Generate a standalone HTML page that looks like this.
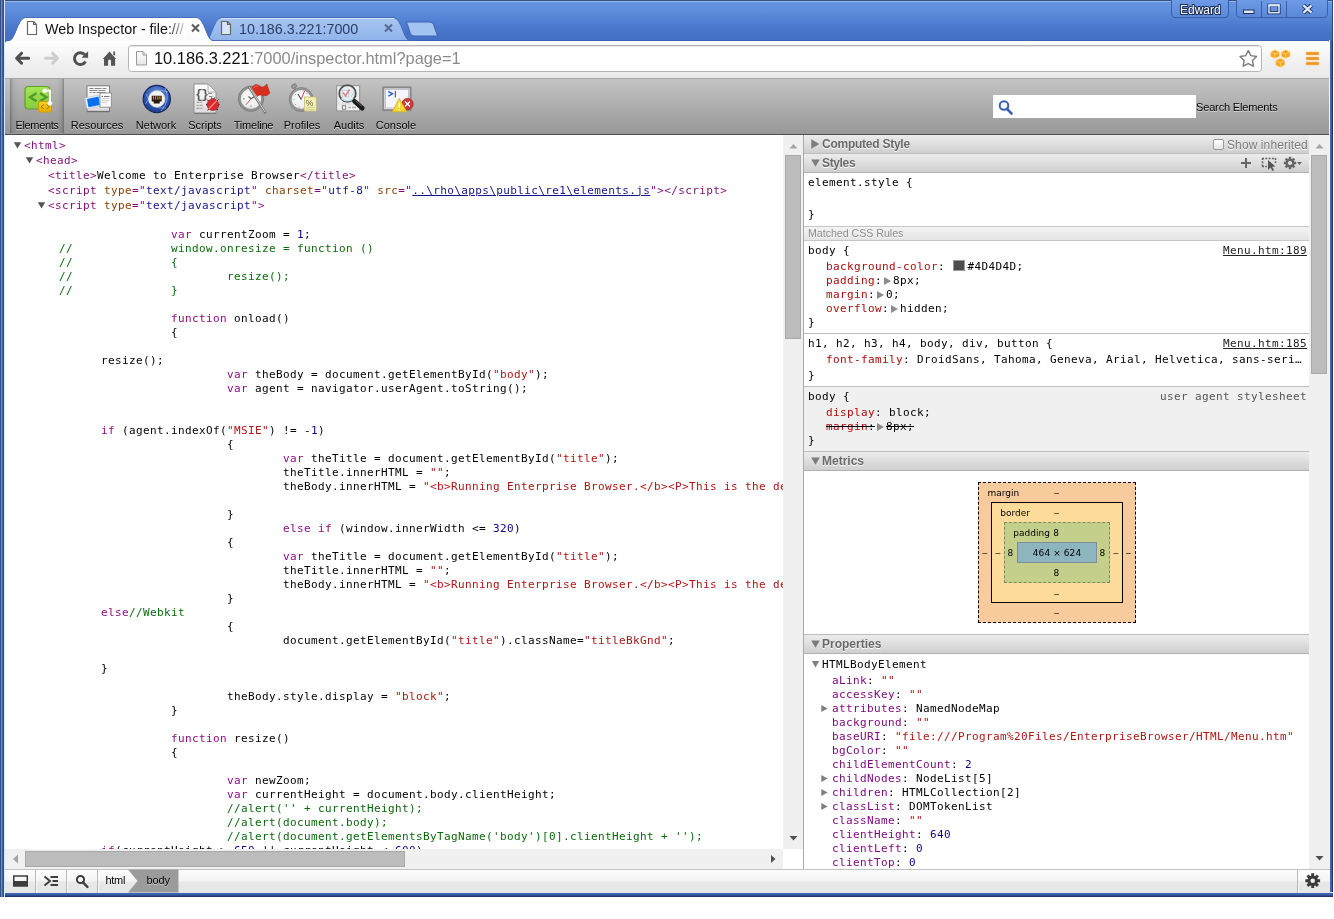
<!DOCTYPE html>
<html>
<head>
<meta charset="utf-8">
<title>Web Inspector</title>
<style>
html,body{margin:0;padding:0;background:#fff;}
body{width:1334px;height:919px;position:relative;overflow:hidden;font-family:"Liberation Sans",sans-serif;}
.abs{position:absolute;}
#win{position:absolute;left:0;top:0;width:1333px;height:897px;background:#345aa6;overflow:hidden;}
#titlebar,#chrome-tb,#dt-tb,#left,#right,#status{will-change:transform;}
#lb{z-index:3;position:absolute;left:0;top:0;width:5px;height:897px;background:linear-gradient(90deg,#32507f 0,#32507f 1px,#6a8cc8 1px,#6a8cc8 2px,#3c5fa6 2px,#3c5fa6 3px,#2f5096 3px,#2f5096 4px,#dbe6f7 4px);}
#rb{position:absolute;left:1329px;top:40px;width:4px;height:857px;background:linear-gradient(90deg,#f4f7fc 0,#f4f7fc 1px,#3c5fa6 1px,#4a6db4 2px,#2f5096 3px,#1f3564 3px);}
#bb{position:absolute;left:0;top:892px;width:1333px;height:5px;background:linear-gradient(#dbe6f7 0,#dbe6f7 1px,#3c62ae 1px,#3c62ae 3px,#2a4a8e 3px,#2a4a8e 4px,#1f3564 4px);}
#titlebar{position:absolute;left:0;top:0;width:1333px;height:41px;z-index:2;}
#tbg{position:absolute;left:0;top:0;width:1333px;height:44px;background:linear-gradient(#34507e 0,#34507e 1px,#9cb8e8 1px,#9cb8e8 2px,#6595e1 2px,#5d8cdb 12px,#4f7cd0 24px,#4571c7 34px,#4470c6 40px,#3d62b0 40px,#3d62b0 41px,#4470c6 41px);}
#chrome-tb{position:absolute;left:5px;top:41px;width:1325px;height:37px;background:linear-gradient(#ffffff,#fafafa 20%,#f0f0f0 60%,#e9e9e9);border-radius:3px 3px 0 0;box-sizing:border-box;z-index:1;}
#dt-tb{position:absolute;left:5px;top:78px;width:1325px;height:57px;background:linear-gradient(#c4c4c4,#adadad 50%,#989898);border-top:1px solid #a6a6a6;border-bottom:1px solid #4d4d4d;box-sizing:border-box;}
#left{position:absolute;left:5px;top:134px;width:778px;height:715px;background:#fff;overflow:hidden;}
#right{position:absolute;left:804px;top:134px;width:505px;height:735px;background:#fff;overflow:hidden;}
#status{position:absolute;left:5px;top:869px;width:1325px;height:24px;background:linear-gradient(#fcfcfc,#f4f4f4 48%,#e8e8e8 52%,#e6e6e6);border-top:1px solid #c2c2c2;box-sizing:border-box;}
.mono{font-family:"DejaVu Sans Mono","Liberation Mono",monospace;font-size:11px;letter-spacing:0.378px;white-space:pre;}
.tl{position:absolute;top:39px;height:14px;line-height:14px;font-size:11px;color:#000;text-align:center;text-shadow:0 1px 0 rgba(255,255,255,.55);white-space:nowrap;}
.r{position:absolute;height:15px;line-height:15px;font-family:"DejaVu Sans Mono","Liberation Mono",monospace;font-size:11px;letter-spacing:0.378px;white-space:pre;color:#000;}
.code{position:absolute;line-height:14px;color:#000;}
.t{color:#7d0e78;}.an{color:#8a4200;}.av{color:#14148c;}
.k{color:#8e0c84;}.s{color:#b01512;}.n{color:#10008a;}.c{color:#0a6a0a;}
.r14{position:absolute;margin-top:1px;height:14px;line-height:14px;font-family:"DejaVu Sans Mono","Liberation Mono",monospace;font-size:11px;letter-spacing:0.378px;white-space:pre;color:#000;}
.sh{position:absolute;left:0;width:505px;background:linear-gradient(#ececec,#dedede 50%,#cfcfcf);border-top:1px solid #bcbcbc;border-bottom:1px solid #b0b0b0;box-sizing:border-box;font-size:12px;font-weight:bold;color:#6a6a6a;text-shadow:0 1px 0 #fff;white-space:nowrap;}
.p{color:#b00a0a;}.q{color:#800a80;}.s2{color:#b01512;}.n2{color:#10008a;}
.exp{display:inline-block;width:0;height:0;border-left:7px solid #8c8c8c;border-top:4px solid transparent;border-bottom:4px solid transparent;margin:0 2px 0 2px;vertical-align:-1px;}
.ml{position:absolute;height:14px;line-height:14px;font-family:"DejaVu Sans","Liberation Sans",sans-serif;font-size:9px;white-space:pre;color:#000;}
</style>
</head>
<body>
<div id="win">
<div id="tbg"></div>
<div id="titlebar">
<svg class="abs" style="left:0;top:0" width="1333" height="41" viewBox="0 0 1333 41">
<defs>
<linearGradient id="tabinact" x1="0" y1="0" x2="0" y2="1"><stop offset="0" stop-color="#a9c6f1"/><stop offset="1" stop-color="#8fb3ea"/></linearGradient>
<linearGradient id="tabact" x1="0" y1="0" x2="0" y2="1"><stop offset="0" stop-color="#ffffff"/><stop offset="1" stop-color="#fbfbfb"/></linearGradient>
<linearGradient id="fadeact" x1="0" y1="0" x2="1" y2="0"><stop offset="0" stop-color="#fff" stop-opacity="0"/><stop offset="1" stop-color="#fff" stop-opacity="0.850"/></linearGradient>
<linearGradient id="capbtn" x1="0" y1="0" x2="0" y2="1"><stop offset="0" stop-color="#6d9ae6"/><stop offset="1" stop-color="#5a88d8"/></linearGradient>
</defs>
<!-- new tab button -->
<path d="M406.500,22 L430,22 Q432.500,22 433.500,24.500 L437.500,36 L414,36 Q411.500,36 410.500,33.500 Z" fill="#a4c4f0" stroke="#3f64b4" stroke-width="1"/>
<!-- inactive tab -->
<path d="M206,40.500 C212,38 213,20 221,17.500 L394,17.500 C402,20 403,38 409,40.500 Z" fill="url(#tabinact)" stroke="#4a6fb8" stroke-width="1"/>
<path d="M221,18.500 L394,18.500" stroke="#cfe0f8" stroke-width="1"/>
<!-- active tab -->
<path d="M9,41 L10.500,40.500 C16,38 17,20 25,17.500 L197,17.500 C205,20 206,38 211.500,40.500 L213,41 Z" fill="url(#tabact)"/><path d="M9,40.800 C16,38 17,20 25,17.500 L197,17.500 C205,20 206,38 213,40.800" fill="none" stroke="#4a6fb8" stroke-width="1"/>
<!-- page icons -->
<g fill="#fff" stroke="#666" stroke-width="1.200" stroke-linejoin="round">
<path d="M27.500,21.500 h6 l3,3 v10 h-9 z"/><path d="M33.500,21.500 v3 h3" fill="none"/>
<path d="M221.500,21.500 h6 l3,3 v10 h-9 z" fill="#d7e5f9"/><path d="M227.500,21.500 v3 h3" fill="none"/>
</g>
<!-- close X -->
<g stroke="#5a5a5a" stroke-width="2" stroke-linecap="butt"><path d="M192,24.500 l7,7 m0,-7 l-7,7"/></g>
<g stroke="#54698f" stroke-width="2" stroke-linecap="butt"><path d="M385,24.500 l7,7 m0,-7 l-7,7"/></g>
<text x="45" y="34" font-family="Liberation Sans, sans-serif" font-size="14.300" fill="#111">Web Inspector - file:///</text>
<rect x="168" y="19" width="18" height="20" fill="url(#fadeact)"/>
<text x="239" y="34" font-family="Liberation Sans, sans-serif" font-size="14.300" fill="#2a3d66">10.186.3.221:7000</text>
<!-- caption buttons -->
<path d="M1171.500,0 V14 Q1171.500,17.500 1175,17.500 H1225 Q1228.500,17.500 1228.500,14 V0" fill="url(#capbtn)" stroke="#3a5ea8"/>
<path d="M1236.500,0 V14 Q1236.500,17.500 1240,17.500 H1324 Q1327.500,17.500 1327.500,14 V0" fill="url(#capbtn)" stroke="#3a5ea8"/>
<path d="M1261.500,1 V17 M1286.500,1 V17" stroke="#3a5ea8"/>
<text x="1180" y="14" font-family="Liberation Sans, sans-serif" font-size="12" fill="#fff" stroke="#1c2f5c" stroke-width="2" paint-order="stroke" >Edward</text>
<rect x="1243.500" y="10" width="10.500" height="3.500" fill="#dfe8fa" stroke="#1c2f5c" stroke-width="1"/>
<rect x="1269" y="5.300" width="10" height="7.400" fill="none" stroke="#1c2f5c" stroke-width="3.200"/>
<rect x="1269" y="5.300" width="10" height="7.400" fill="none" stroke="#dfe8fa" stroke-width="1.500"/>
<path d="M1268.300,5.300 h11.400" stroke="#dfe8fa" stroke-width="2.200"/>
<path d="M1303.500,5.300 L1311.500,12.700 M1311.500,5.300 L1303.500,12.700" stroke="#1c2f5c" stroke-width="4.200"/>
<path d="M1303.500,5.300 L1311.500,12.700 M1311.500,5.300 L1303.500,12.700" stroke="#dfe8fa" stroke-width="2.300"/>
</svg>
</div>
<div id="chrome-tb">
<svg class="abs" style="left:0;top:-1px" width="1325" height="38" viewBox="5 40 1325 38">
<defs><linearGradient id="pg" x1="0" y1="0" x2="0" y2="1"><stop offset="0" stop-color="#fff"/><stop offset="1" stop-color="#e6e6e6"/></linearGradient></defs>
<!-- back -->
<path d="M28.700,58.200 H18 M21.600,53.200 L16.600,58.200 L21.600,63.200" fill="none" stroke="#505050" stroke-width="3" stroke-linecap="round" stroke-linejoin="round"/>
<!-- forward -->
<path d="M45.500,58.200 H56 M52.500,53.200 L57.500,58.200 L52.500,63.200" fill="none" stroke="#cdcdcd" stroke-width="3" stroke-linecap="round" stroke-linejoin="round"/>
<!-- reload -->
<path d="M85.500,61.550 A5.900,5.900 0 1 1 84.900,54.800" fill="none" stroke="#505050" stroke-width="3"/>
<path d="M88.100,51.200 V57.700 H81.500 Z" fill="#505050"/>
<!-- home -->
<path d="M109.500,51.600 L116.200,58.900 H115.100 V65.800 H111 V61 Q111,59.500 109.550,59.500 Q108.100,59.500 108.100,61 V65.800 H104 V58.900 H102.800 Z" fill="#555"/>
<path d="M113.300,51.400 H115 V56 L113.300,54.200 Z" fill="#555"/>
<!-- url box -->
<rect x="128.500" y="45.500" width="1133" height="26" rx="3" ry="3" fill="#fff" stroke="#b4b4b4"/>
<path d="M130,46.500 H1260" stroke="#e6e6e6"/>
<path d="M136.500,51.500 h6.500 l3.500,3.500 v10 h-10 z" fill="url(#pg)" stroke="#9a9a9a" stroke-linejoin="round"/>
<path d="M143,51.500 v3.500 h3.500" fill="none" stroke="#9a9a9a"/>
<text x="154" y="64" font-family="Liberation Sans, sans-serif" font-size="16.400" fill="#111">10.186.3.221<tspan fill="#8a8a8a">:7000/inspector.html?page=1</tspan></text>
<!-- star -->
<path d="M1248.3,50.5 L1250.9,55.6 L1256.6,56.5 L1252.5,60.6 L1253.4,66.2 L1248.3,63.6 L1243.2,66.2 L1244.1,60.6 L1240.0,56.5 L1245.7,55.6 Z" fill="#fff" stroke="#7a7a7a" stroke-width="1.400" stroke-linejoin="round"/>
<!-- extension cubes -->
<g stroke="#ffdf9c" stroke-width="0.700" stroke-linejoin="round">
<path d="M1270.600,52 l4.400,-2.200 l4.400,2.200 v4.400 l-4.400,2.200 l-4.400,-2.200 z" fill="#f5a21c"/><path d="M1270.600,52 l4.400,2.200 l4.400,-2.200 M1275,54.200 v4.400" fill="none"/>
<path d="M1281.200,52 l4.400,-2.200 l4.400,2.200 v4.400 l-4.400,2.200 l-4.400,-2.200 z" fill="#f5a21c"/><path d="M1281.200,52 l4.400,2.200 l4.400,-2.200 M1285.600,54.200 v4.400" fill="none"/>
<path d="M1275.700,60.500 l4.600,-2.300 l4.600,2.300 v4.600 l-4.600,2.300 l-4.600,-2.300 z" fill="#f5a21c"/><path d="M1275.700,60.500 l4.600,2.300 l4.600,-2.300 M1280.300,62.800 v4.600" fill="none"/>
</g>
<!-- menu -->
<g fill="#ee9520" stroke="#f7c070" stroke-width="0.500"><rect x="1306" y="52" width="13" height="3" rx="0.800"/><rect x="1306" y="57" width="13" height="3" rx="0.800"/><rect x="1306" y="62" width="13" height="3" rx="0.800"/></g>
</svg>
</div>
<div id="dt-tb">
<div class="abs" style="left:5px;top:0;width:54px;height:54px;background:linear-gradient(90deg,rgba(0,0,0,.3),rgba(0,0,0,.1) 5%,rgba(0,0,0,.045) 14%,rgba(0,0,0,.04) 50%,rgba(0,0,0,.045) 86%,rgba(0,0,0,.1) 95%,rgba(0,0,0,.3));"></div>
<svg class="abs" style="left:0;top:-1px" width="1325" height="56" viewBox="5 78 1325 56">
<defs>
<linearGradient id="gEl" x1="0" y1="0" x2="0" y2="1"><stop offset="0" stop-color="#a4e652"/><stop offset="1" stop-color="#86cc3c"/></linearGradient>
<linearGradient id="gEl2" x1="0" y1="0" x2="0" y2="1"><stop offset="0" stop-color="#f5d21c"/><stop offset="1" stop-color="#dfae00"/></linearGradient>
<radialGradient id="gNet" cx="0.5" cy="0.35" r="0.7"><stop offset="0" stop-color="#7fa2e6"/><stop offset="0.6" stop-color="#2f56b4"/><stop offset="1" stop-color="#1b3680"/></radialGradient>
<linearGradient id="gPaper" x1="0" y1="0" x2="0" y2="1"><stop offset="0" stop-color="#ffffff"/><stop offset="1" stop-color="#dcdcdc"/></linearGradient>
<radialGradient id="gClock" cx="0.5" cy="0.4" r="0.6"><stop offset="0" stop-color="#ffffff"/><stop offset="0.75" stop-color="#eeeeee"/><stop offset="1" stop-color="#c8c8c8"/></radialGradient>
</defs>
<!-- Elements -->
<g>
<rect x="25" y="86.500" width="25" height="22.500" rx="3.500" fill="url(#gEl)" stroke="#5f9e28" stroke-width="1.200"/>
<path d="M36.500,93.300 l-6.500,4 l6.500,4 M40,93.300 l6.500,4 l-6.500,4" fill="none" stroke="#4e9a2a" stroke-width="2.300"/>
<rect x="38.500" y="101.500" width="13" height="10.500" rx="1.500" fill="url(#gEl2)" stroke="#c9a000" stroke-width="1"/>
<path d="M44,104.500 l-3,2.200 l3,2.200 M46.500,104.500 l3,2.200 l-3,2.200" fill="none" stroke="#a47800" stroke-width="1"/>
<path d="M44.700,90.700 H50 V103.300" fill="none" stroke="#5f9e28" stroke-width="3.400" opacity="0.500"/>
<path d="M44.700,90.700 H50 V103.300" fill="none" stroke="#fff" stroke-width="2.200"/>
<circle cx="44.700" cy="90.700" r="2.300" fill="#fff"/><circle cx="50" cy="103.300" r="2.300" fill="#fff"/>
</g>
<!-- Resources -->
<g>
<rect x="87" y="85.800" width="22.500" height="25.500" fill="url(#gPaper)" stroke="#7a7a7a" stroke-width="1"/>
<path d="M87,111.800 h22.500" stroke="#555" stroke-width="1" opacity="0.600"/>
<path d="M89.500,88.500 h4 M94.500,88.500 h7 M102.500,88.500 h4 M89.500,90.500 h8 M98.500,90.500 h7 M89.500,92.500 h2 M92.500,92.500 h3 M96.500,92.500 h9" stroke="#7c7c7c" stroke-width="0.900"/>
<path d="M84.900,98 L99.300,95 L101,106 L86.900,108.800 Z" fill="#f4f8fd" stroke="#b9c2cf" stroke-width="0.700"/>
<path d="M87,98.900 L98.600,96.600 L99.900,105 L88.400,107.300 Z" fill="#0b70ee"/>
<rect x="100" y="93" width="11.300" height="14.200" fill="#fdfdfd" stroke="#8a8a8a" stroke-width="0.900"/>
<path d="M101.500,96.500 h1.600 M104,96.500 h5.500" stroke="#777" stroke-width="1.100"/><path d="M101.500,98.600 h8 M101.500,100.600 h8 M101.500,102.600 h5.500" stroke="#c2c2c2" stroke-width="0.800"/>
</g>
<!-- Network -->
<g>
<circle cx="156.800" cy="99" r="13.600" fill="url(#gNet)" stroke="#15285e" stroke-width="1.200"/>
<path d="M145.500,104 Q154,86 168,92" fill="none" stroke="#9dbaf2" stroke-width="0.900" opacity="0.700"/>
<path d="M146,94 Q152,110 166,108" fill="none" stroke="#9dbaf2" stroke-width="0.900" opacity="0.600"/>
<path d="M165,88 Q171,100 161,111" fill="none" stroke="#bcd0f7" stroke-width="0.900" opacity="0.700"/>
<circle cx="156.800" cy="99" r="8.200" fill="#f4f4f4" stroke="#dcdcdc" stroke-width="0.800"/>
<path d="M151.700,95.700 h10 v5.700 h-2 v2.200 h-6 v-2.200 h-2 z" fill="#2a1a08"/>
<path d="M153.500,96.200 v3.400 M155.600,96.200 v3.400 M157.800,96.200 v3.400 M159.900,96.200 v3.400" stroke="#d89018" stroke-width="1.100"/>
</g>
<!-- Scripts -->
<g>
<path d="M194,84 h14 l8,8 v21 h-22 z" fill="url(#gPaper)" stroke="#8f8f8f" stroke-width="1"/>
<path d="M208,84 v8 h8 z" fill="#f6f6f6" stroke="#a0a0a0" stroke-width="0.800"/>
<path d="M194,113.500 h22" stroke="#555" opacity="0.500"/>
<text x="195.300" y="97.500" font-family="Liberation Mono, monospace" font-size="12.500" font-weight="bold" fill="#5a5a5a" letter-spacing="-1.500">{}</text>
<path d="M196.500,102.300 h3 M200.500,102.300 h1.500 M196.500,105.300 h2 M199.500,105.300 h3 M196.500,108.300 h3 M200.500,108.300 h2 M208,93.500 h4 M209,96.500 h3.500" stroke="#808080" stroke-width="0.900"/>
<g stroke="#3a0608" stroke-width="1"><path d="M207,99.500 l2,2 M206,104.700 h2.500 M207.500,110 l2,-1.500 M218.500,99.500 l-2,2 M219.500,104.700 h-2.500 M218,110 l-2,-1.500 M211.500,97.500 l0.800,2 M214.500,97.500 l-0.800,2"/></g>
<circle cx="212.800" cy="104.700" r="5.800" fill="#dc2a2e" stroke="#a01418" stroke-width="0.700"/>
<path d="M208.700,108.800 L216.900,100.600" stroke="#f59a9a" stroke-width="1.200"/>
</g>
<!-- Timeline -->
<g>
<circle cx="251" cy="98.700" r="11.500" fill="url(#gClock)" stroke="#909090" stroke-width="2.600"/>
<circle cx="251" cy="98.700" r="12.700" fill="none" stroke="#6e6e6e" stroke-width="0.600"/>
<path d="M248.500,96.500 L251,98.700 L254.500,96.500" fill="none" stroke="#555" stroke-width="1.200"/>
<path d="M251,98.700 L246,104.800" stroke="#e04040" stroke-width="0.900"/>
<circle cx="243.800" cy="98.700" r="0.700" fill="#777"/><circle cx="251" cy="106" r="0.700" fill="#777"/>
<path d="M249,87 L265.200,112.600" stroke="#777" stroke-width="2.400" stroke-linecap="round"/>
<path d="M249.300,87 L265,112" stroke="#dedede" stroke-width="0.900"/>
<path d="M251.800,88.300 C253.500,85 256,83.800 258.500,85.200 C260.500,86.500 262,87.500 263.500,86.800 C265,86 266,85 266.700,84 L269.800,92.700 C269,94.200 268,95 266.700,95.400 C264,96.200 262.500,95 260.500,95 C259.300,95 258.200,95.500 257.400,96.500 Z" fill="#d83020" stroke="#a01c10" stroke-width="0.500"/>
<path d="M253,88.500 C254.500,86.500 256,85.500 258,86.300" fill="none" stroke="#f08070" stroke-width="0.900"/>
</g>
<!-- Profiles -->
<g>
<rect x="291.500" y="84.300" width="5" height="3.600" rx="1" fill="#9c9c9c" stroke="#6a6a6a" stroke-width="0.700" transform="rotate(-32 294 86)"/>
<path d="M294.500,88 l1.500,2.200" stroke="#8a8a8a" stroke-width="2"/>
<circle cx="301.200" cy="99.500" r="10.800" fill="url(#gClock)" stroke="#969696" stroke-width="2.500"/>
<circle cx="301.200" cy="99.500" r="12" fill="none" stroke="#707070" stroke-width="0.600"/>
<path d="M301.200,99.500 L298,94" stroke="#445" stroke-width="1.100"/>
<path d="M301.200,99.500 L304.500,91" stroke="#d03040" stroke-width="0.900"/>
<g fill="#c08080"><circle cx="294" cy="99.500" r="0.500"/><circle cx="295.500" cy="104.500" r="0.500"/><circle cx="299" cy="107" r="0.500"/><circle cx="295.500" cy="94.500" r="0.500"/><circle cx="307" cy="93.500" r="0.500"/></g>
<rect x="304.500" y="97" width="11.700" height="14" fill="#f6f2b4" stroke="#c5bf78" stroke-width="0.800"/>
<text x="305.700" y="105.700" font-family="Liberation Sans, sans-serif" font-size="8.500" fill="#606050">%</text>
<path d="M306,107.300 h8.500 M306,109.300 h8.500" stroke="#c5bf78" stroke-width="0.700"/>
</g>
<!-- Audits -->
<g>
<rect x="336.700" y="85.700" width="23" height="25.200" fill="#f0f0f0" stroke="#8f8f8f" stroke-width="1"/>
<path d="M338,104 h20" stroke="#d0d0d0"/>
<rect x="342.300" y="90.300" width="6.500" height="6.500" fill="#fff" stroke="#c99" stroke-width="0.900"/>
<path d="M343,92.500 l2.500,3.200 l4,-6.200" fill="none" stroke="#d42a2a" stroke-width="1.700"/>
<text x="351" y="97" font-family="Liberation Sans, sans-serif" font-size="8.500" fill="#a4a4a4">A</text>
<rect x="342.300" y="105.800" width="3.400" height="3.400" fill="#fff" stroke="#707070" stroke-width="0.900"/>
<path d="M348,107.500 h3 M352,107.500 h4" stroke="#b0b0b0" stroke-width="1.600"/>
<circle cx="347.500" cy="93.500" r="8.300" fill="rgba(215,240,245,0.500)" stroke="#505050" stroke-width="1.800"/>
<path d="M341.500,98.500 Q347.500,103 353.500,98.500" fill="none" stroke="#bfe8ee" stroke-width="1.600" opacity="0.900"/>
<path d="M354.500,101.300 L362.300,108.200" stroke="#1a1a1a" stroke-width="4.600" stroke-linecap="round"/>
<path d="M355.500,100.800 L361.500,106" stroke="#777" stroke-width="0.800" stroke-linecap="round"/>
</g>
<!-- Console -->
<g>
<rect x="383.300" y="87.400" width="27.300" height="22.700" fill="#eeeef4" stroke="#8a8a8a" stroke-width="2"/>
<rect x="385.500" y="89.600" width="23" height="18.400" fill="#f5f5fb" stroke="#b8b8c0" stroke-width="0.800"/>
<path d="M388.300,91.500 l4.200,2.300 l-4.200,2.300" fill="none" stroke="#2e6ae0" stroke-width="1.500"/>
<path d="M395.300,91 v6.500" stroke="#444" stroke-width="1"/>
<circle cx="407.500" cy="104" r="5.700" fill="#d63434" stroke="#a81c1c" stroke-width="0.600"/>
<path d="M405,101.500 l5,5 m0,-5 l-5,5" stroke="#fff" stroke-width="1.300"/>
<path d="M399.200,98.300 L406.700,111.800 H392.300 Z" fill="#f7d838" stroke="#d8b020" stroke-width="0.800" stroke-linejoin="round"/>
<path d="M399.300,102.500 v5" stroke="#fffbe0" stroke-width="1.400"/><circle cx="399.300" cy="109.700" r="0.800" fill="#fffbe0"/>
</g>
<!-- search -->
<rect x="993" y="95" width="203" height="23" fill="#fff"/>
<circle cx="1004" cy="105.500" r="4.300" fill="none" stroke="#3a5fae" stroke-width="2"/>
<path d="M1007,108.800 L1011.500,113.500" stroke="#3a5fae" stroke-width="2.600" stroke-linecap="round"/>
</svg>
<div class="tl" style="left:-5px;width:74px;letter-spacing:-0.350px;">Elements</div>
<div class="tl" style="left:55px;width:74px;">Resources</div>
<div class="tl" style="left:114px;width:74px;">Network</div>
<div class="tl" style="left:163px;width:74px;">Scripts</div>
<div class="tl" style="left:211.500px;width:74px;letter-spacing:-0.200px;">Timeline</div>
<div class="tl" style="left:260px;width:74px;">Profiles</div>
<div class="tl" style="left:307px;width:74px;">Audits</div>
<div class="tl" style="left:354px;width:74px;">Console</div>
<div class="tl" style="left:1191px;top:21px;width:auto;text-align:left;letter-spacing:-0.150px;">Search Elements</div>
</div>
<div id="left">
<svg class="abs" style="left:8px;top:7px" width="9" height="8"><path d="M0.800,1.300 H8.200 L4.500,7.600 Z" fill="#555"/></svg>
<div class="r" style="left:19px;top:3.5px"><span class="t">&lt;html&gt;</span></div>
<svg class="abs" style="left:20px;top:22px" width="9" height="8"><path d="M0.800,1.300 H8.200 L4.500,7.600 Z" fill="#555"/></svg>
<div class="r" style="left:31px;top:18.5px"><span class="t">&lt;head&gt;</span></div>
<div class="r" style="left:43px;top:33.5px"><span class="t">&lt;title&gt;</span>Welcome to Enterprise Browser<span class="t">&lt;/title&gt;</span></div>
<div class="r" style="left:43px;top:48.5px"><span class="t">&lt;script</span> <span class="an">type</span><span class="t">="</span><span class="av">text/javascript</span><span class="t">"</span> <span class="an">charset</span><span class="t">="</span><span class="av">utf-8</span><span class="t">"</span> <span class="an">src</span><span class="t">="</span><span class="av"><u>..\rho\apps\public\re1\elements.js</u></span><span class="t">"</span><span class="t">&gt;&lt;/script&gt;</span></div>
<svg class="abs" style="left:32px;top:67px" width="9" height="8"><path d="M0.800,1.300 H8.200 L4.500,7.600 Z" fill="#555"/></svg>
<div class="r" style="left:43px;top:63.5px"><span class="t">&lt;script</span> <span class="an">type</span><span class="t">="</span><span class="av">text/javascript</span><span class="t">"</span><span class="t">&gt;</span></div>
<div class="code mono" style="left:54px;top:94px">                <span class="k">var</span> currentZoom = <span class="n">1</span>;
<span class="c">//              window.onresize = function ()</span>
<span class="c">//              {</span>
<span class="c">//                      resize();</span>
<span class="c">//              }</span>

                <span class="k">function</span> onload()
                {

      resize();
                        <span class="k">var</span> theBody = document.getElementById(<span class="s">"body"</span>);
                        <span class="k">var</span> agent = navigator.userAgent.toString();


      <span class="k">if</span> (agent.indexOf(<span class="s">"MSIE"</span>) != -<span class="n">1</span>)
                        {
                                <span class="k">var</span> theTitle = document.getElementById(<span class="s">"title"</span>);
                                theTitle.innerHTML = <span class="s">""</span>;
                                theBody.innerHTML = <span class="s">"&lt;b&gt;Running Enterprise Browser.&lt;/b&gt;&lt;P&gt;This is the default start page. Refer to the help file for more information.&lt;/P&gt;"</span>;

                        }
                                <span class="k">else</span> <span class="k">if</span> (window.innerWidth &lt;= <span class="n">320</span>)
                        {
                                <span class="k">var</span> theTitle = document.getElementById(<span class="s">"title"</span>);
                                theTitle.innerHTML = <span class="s">""</span>;
                                theBody.innerHTML = <span class="s">"&lt;b&gt;Running Enterprise Browser.&lt;/b&gt;&lt;P&gt;This is the default start page. Refer to the help file for more information.&lt;/P&gt;"</span>;
                        }
      <span class="k">else</span><span class="c">//Webkit</span>
                        {
                                document.getElementById(<span class="s">"title"</span>).className=<span class="s">"titleBkGnd"</span>;

      }

                        theBody.style.display = <span class="s">"block"</span>;
                }

                <span class="k">function</span> resize()
                {

                        <span class="k">var</span> newZoom;
                        <span class="k">var</span> currentHeight = document.body.clientHeight;
                        <span class="c">//alert('' + currentHeight);</span>
                        <span class="c">//alert(document.body);</span>
                        <span class="c">//alert(document.getElementsByTagName('body')[0].clientHeight + '');</span>
      <span class="k">if</span>(currentHeight &gt; <span class="n">650</span> || currentHeight &lt; <span class="n">600</span>)</div>
</div>
<div id="right">
<div class="sh" style="top:0px;height:20px;"><span style="position:absolute;left:18px;top:2.250px;line-height:15px;letter-spacing:-0.250px;">Computed Style</span></div>
<svg class="abs" style="left:7px;top:4.600px" width="9" height="10"><path d="M0.300,0.300 V9.700 L8.300,5 Z" fill="#7c7c7c"/></svg>
<div class="sh" style="top:19px;height:20px;"><span style="position:absolute;left:18px;top:1.500px;line-height:15px;letter-spacing:-0.350px;">Styles</span></div>
<svg class="abs" style="left:6.500px;top:24.700px" width="9" height="8"><path d="M0.200,0.500 H8.800 L4.500,7.800 Z" fill="#7c7c7c"/></svg>
<div class="abs" style="left:409px;top:5px;width:9px;height:9px;border:1px solid #9a9a9a;border-radius:2px;background:linear-gradient(#fff,#e4e4e4);"></div><div class="abs" style="left:423px;top:4px;font-size:12px;line-height:14px;color:#7a7a7a;text-shadow:0 1px 0 #fff;letter-spacing:0.100px;">Show inherited</div>
<svg class="abs" style="left:432px;top:20px" width="72" height="18" viewBox="1236 154 72 18">
<path d="M1241,163 h10 M1246,158 v10" stroke="#666" stroke-width="2"/>
<path d="M1262,158.500 h13 M1262,166.500 h5 M1262.500,158 v9 M1275.500,158 v5" stroke="#666" stroke-width="1.600" stroke-dasharray="2 1.300"/>
<path d="M1268,160 v10 l2.500,-2.500 l2,3.500 l1.600,-0.800 l-2,-3.500 l3.400,-0.200 z" fill="#555"/>
<g fill="#666"><circle cx="1290" cy="163" r="4.600"/>
<g stroke="#666" stroke-width="2.400"><path d="M1290,156.800 v12.400 M1283.800,163 h12.400 M1285.600,158.600 l8.800,8.800 M1294.400,158.600 l-8.800,8.800"/></g></g>
<circle cx="1290" cy="163" r="2" fill="#e6e6e6"/>
<path d="M1297,162 h5 l-2.500,3 z" fill="#666"/>
</svg>
<div class="r14" style="left:4px;top:41px;">element.style {</div>
<div class="r14" style="left:4px;top:73px;">}</div>
<div class="abs" style="left:0;top:91.5px;width:505px;height:15px;background:linear-gradient(#f3f3f3,#e4e4e4);border-top:1px solid #c6c6c6;border-bottom:1px solid #c6c6c6;box-sizing:border-box;"><span style="position:absolute;left:4px;top:-1px;line-height:14px;font-size:10.600px;color:#8a8a8a;text-shadow:0 1px 0 #fff;">Matched CSS Rules</span></div>
<div class="r14" style="left:4px;top:109px;">body {</div>
<div class="r14" style="right:2px;top:109px;color:#222;"><u>Menu.htm:189</u></div>
<div class="r14" style="left:22px;top:125px;"><span class="p">background-color</span>: <span style="display:inline-block;width:12px;height:11.500px;background:#4d4d4d;border:1px solid #9a9a9a;box-sizing:border-box;vertical-align:-1px;margin:-4px 2.500px 0 1px;"></span>#4D4D4D;</div>
<div class="r14" style="left:22px;top:139px;"><span class="p">padding</span>:<span class="exp"></span>8px;</div>
<div class="r14" style="left:22px;top:153px;"><span class="p">margin</span>:<span class="exp"></span>0;</div>
<div class="r14" style="left:22px;top:167px;"><span class="p">overflow</span>:<span class="exp"></span>hidden;</div>
<div class="r14" style="left:4px;top:181px;">}</div>
<div class="abs" style="left:0;top:198.5px;width:505px;height:1px;background:#bcbcbc;"></div>
<div class="r14" style="left:4px;top:202px;">h1, h2, h3, h4, body, div, button {</div>
<div class="r14" style="right:2px;top:202px;color:#222;"><u>Menu.htm:185</u></div>
<div class="r14" style="left:22px;top:218px;"><span class="p">font-family</span>: DroidSans, Tahoma, Geneva, Arial, Helvetica, sans-seri…</div>
<div class="r14" style="left:4px;top:234px;">}</div>
<div class="abs" style="left:0;top:251.5px;width:505px;height:1px;background:#bcbcbc;"></div>
<div class="abs" style="left:0;top:252.500px;width:505px;height:64.500px;background:#f0f0f0;"></div>
<div class="r14" style="left:4px;top:255px;">body {</div>
<div class="r14" style="right:2px;top:255px;color:#555;">user agent stylesheet</div>
<div class="r14" style="left:22px;top:271px;"><span class="p">display</span>: block;</div>
<div class="r14" style="left:22px;top:285px;"><span style="text-decoration:line-through;text-decoration-color:#000;"><span class="p">margin</span>:<span class="exp"></span>8px;</span></div>
<div class="r14" style="left:4px;top:299px;">}</div>
<div class="sh" style="top:317px;height:20px;"><span style="position:absolute;left:18px;top:2.250px;line-height:15px;">Metrics</span></div>
<svg class="abs" style="left:6.500px;top:323px" width="9" height="8"><path d="M0.200,0.500 H8.800 L4.500,7.800 Z" fill="#7c7c7c"/></svg>
<div class="abs mt" style="left:174px;top:348px;width:158px;height:141px;background:#f8cb9c;border:1px dashed #000;box-sizing:border-box;"></div>
<div class="abs mt" style="left:187px;top:368px;width:132px;height:101px;background:#fddc9b;border:1px solid #000;box-sizing:border-box;"></div>
<div class="abs mt" style="left:200px;top:388px;width:106px;height:61px;background:#c3cf8b;border:1px dashed #7f8b59;box-sizing:border-box;"></div>
<div class="abs mt" style="left:213px;top:408px;width:80px;height:21px;background:#8cb5c0;border:1px solid #7d8f96;box-sizing:border-box;"></div>
<div class="ml" style="left:183.4px;top:352px;">margin</div>
<div class="ml" style="left:249.8px;top:352px;">‒</div>
<div class="ml" style="left:196.2px;top:372px;">border</div>
<div class="ml" style="left:249.8px;top:372px;">‒</div>
<div class="ml" style="left:209.3px;top:392px;">padding</div>
<div class="ml" style="left:249.3px;top:392px;">8</div>
<div class="ml" style="left:178.1px;top:412px;">‒</div>
<div class="ml" style="left:191px;top:412px;">‒</div>
<div class="ml" style="left:203.6px;top:412px;">8</div>
<div class="ml" style="left:213px;top:412px;width:80px;text-align:center;letter-spacing:0.100px;">464 × 624</div>
<div class="ml" style="left:295.6px;top:412px;">8</div>
<div class="ml" style="left:309px;top:412px;">‒</div>
<div class="ml" style="left:321.5px;top:412px;">‒</div>
<div class="ml" style="left:249.6px;top:431.5px;">8</div>
<div class="ml" style="left:249.8px;top:452.5px;">‒</div>
<div class="ml" style="left:249.8px;top:472.3px;">‒</div>
<div class="sh" style="top:500px;height:20px;"><span style="position:absolute;left:18px;top:2.250px;line-height:15px;">Properties</span></div>
<svg class="abs" style="left:6.500px;top:506px" width="9" height="8"><path d="M0.200,0.500 H8.800 L4.500,7.800 Z" fill="#7c7c7c"/></svg>
<svg class="abs" style="left:7px;top:526px" width="9" height="8"><path d="M0.800,1 H8.200 L4.500,7.500 Z" fill="#808080"/></svg>
<div class="r14" style="left:18px;top:523px;">HTMLBodyElement</div>
<div class="r14" style="left:28px;top:539px;"><span class="q">aLink</span>: <span class="s2">""</span></div>
<div class="r14" style="left:28px;top:553px;"><span class="q">accessKey</span>: <span class="s2">""</span></div>
<svg class="abs" style="left:17px;top:570.5px" width="7" height="7"><path d="M0.300,0 V7 L6.600,3.500 Z" fill="#7e7e7e"/></svg>
<div class="r14" style="left:28px;top:567px;"><span class="q">attributes</span>: NamedNodeMap</div>
<div class="r14" style="left:28px;top:581px;"><span class="q">background</span>: <span class="s2">""</span></div>
<div class="r14" style="left:28px;top:595px;"><span class="q">baseURI</span>: <span class="s2">"file:///Program%20Files/EnterpriseBrowser/HTML/Menu.htm"</span></div>
<div class="r14" style="left:28px;top:609px;"><span class="q">bgColor</span>: <span class="s2">""</span></div>
<div class="r14" style="left:28px;top:623px;"><span class="q">childElementCount</span>: <span class="n2">2</span></div>
<svg class="abs" style="left:17px;top:640.5px" width="7" height="7"><path d="M0.300,0 V7 L6.600,3.500 Z" fill="#7e7e7e"/></svg>
<div class="r14" style="left:28px;top:637px;"><span class="q">childNodes</span>: NodeList[5]</div>
<svg class="abs" style="left:17px;top:654.5px" width="7" height="7"><path d="M0.300,0 V7 L6.600,3.500 Z" fill="#7e7e7e"/></svg>
<div class="r14" style="left:28px;top:651px;"><span class="q">children</span>: HTMLCollection[2]</div>
<svg class="abs" style="left:17px;top:668.5px" width="7" height="7"><path d="M0.300,0 V7 L6.600,3.500 Z" fill="#7e7e7e"/></svg>
<div class="r14" style="left:28px;top:665px;"><span class="q">classList</span>: DOMTokenList</div>
<div class="r14" style="left:28px;top:679px;"><span class="q">className</span>: <span class="s2">""</span></div>
<div class="r14" style="left:28px;top:693px;"><span class="q">clientHeight</span>: <span class="n2">640</span></div>
<div class="r14" style="left:28px;top:707px;"><span class="q">clientLeft</span>: <span class="n2">0</span></div>
<div class="r14" style="left:28px;top:721px;"><span class="q">clientTop</span>: <span class="n2">0</span></div>
</div>
<!-- left vertical scrollbar -->
<div class="abs" style="left:783px;top:134px;width:20px;height:715px;background:#f0f0f0;"></div>
<div class="abs" style="left:785px;top:155px;width:16px;height:184px;background:#bcbcbc;border:1px solid #a9a9a9;box-sizing:border-box;"></div>
<svg class="abs" style="left:783px;top:134px" width="20" height="715"><path d="M6.500,14.500 h8 l-4,-4.500 z" fill="#a3a3a3"/><path d="M6.500,702 h8 l-4,4.500 z" fill="#505050"/></svg>
<div class="abs" style="left:803px;top:134px;width:1px;height:735px;background:#a9a9a9;"></div>
<!-- left horizontal scrollbar -->
<div class="abs" style="left:5px;top:849px;width:778px;height:20px;background:#f0f0f0;"></div>
<div class="abs" style="left:783px;top:849px;width:20px;height:20px;background:#fff;"></div>
<div class="abs" style="left:25px;top:851px;width:380px;height:16px;background:#bcbcbc;border:1px solid #a9a9a9;box-sizing:border-box;"></div>
<svg class="abs" style="left:5px;top:849px" width="778" height="20"><path d="M13,5.500 v9 l-5,-4.500 z" fill="#a3a3a3"/><path d="M766,6 v8 l4.500,-4 z" fill="#505050"/></svg>
<!-- right vertical scrollbar -->
<div class="abs" style="left:1309px;top:134px;width:20px;height:735px;background:#f0f0f0;"></div>
<div class="abs" style="left:1329px;top:134px;width:1px;height:735px;background:#fff;"></div>
<div class="abs" style="left:1311px;top:155px;width:16px;height:219px;background:#bcbcbc;border:1px solid #a9a9a9;box-sizing:border-box;"></div>
<svg class="abs" style="left:1309px;top:134px" width="20" height="735"><path d="M6.500,14.500 h8 l-4,-4.500 z" fill="#a3a3a3"/><path d="M6.500,722 h8 l-4,4.500 z" fill="#505050"/></svg>
<div class="abs" style="left:5px;top:134px;width:1325px;height:1px;background:#4d4d4d;"></div>
<div class="abs" style="left:1332px;top:0;width:1px;height:41px;background:#2a4a8e;z-index:3;"></div>
<div id="lb"></div><div id="rb"></div><div id="bb"></div>
<div id="status">
<svg class="abs" style="left:0;top:-1px" width="1325" height="24" viewBox="5 869 1325 24">
<path d="M128,869.500 H178.500 V892.500 H128 L137.500,881 Z" fill="#9b9b9b"/>
<path d="M35.500,870 V893 M66.500,870 V893 M97.500,870 V893 M1297.500,870 V893" stroke="#b8b8b8"/>
<path d="M36.500,870 V893 M67.500,870 V893 M98.500,870 V893 M1298.500,870 V893" stroke="#fff" opacity="0.700"/>
<rect x="13.750" y="876" width="13.500" height="10" fill="none" stroke="#3c3c3c" stroke-width="1.500"/><rect x="14" y="881" width="13" height="5" fill="#3c3c3c"/>
<path d="M44.500,876.500 L50,881 L44.500,885.500" fill="none" stroke="#3c3c3c" stroke-width="1.900"/>
<path d="M50.500,877 H58 M52.500,881 H58 M50.500,885 H58" stroke="#3c3c3c" stroke-width="1.800"/>
<circle cx="80.500" cy="879.500" r="3.600" fill="none" stroke="#3c3c3c" stroke-width="2"/><path d="M83,882.300 L87.500,887" stroke="#3c3c3c" stroke-width="2.400" stroke-linecap="round"/>
<g fill="#3a3a3a"><circle cx="1312.700" cy="880.700" r="5.200"/><g stroke="#3a3a3a" stroke-width="2.900"><path d="M1312.700,873.300 v14.800 M1305.300,880.700 h14.800 M1307.500,875.500 l10.400,10.400 M1317.900,875.500 l-10.400,10.400"/></g></g>
<circle cx="1312.700" cy="880.700" r="2.300" fill="#eee"/>
</svg>
<div class="abs" style="left:100.500px;top:3px;font-size:11px;letter-spacing:-0.300px;line-height:14px;color:#000;text-shadow:0 1px 0 #fff;">html</div>
<div class="abs" style="left:141.500px;top:3px;font-size:11px;letter-spacing:-0.100px;line-height:14px;color:#000;text-shadow:0 1px 0 rgba(255,255,255,.5);">body</div>
</div>
</div>
</body>
</html>
